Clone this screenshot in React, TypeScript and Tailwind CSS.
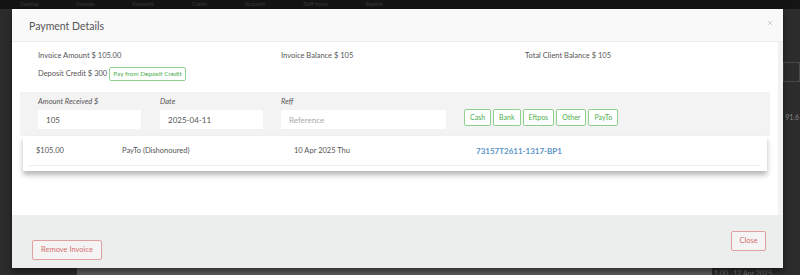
import { X } from "lucide-react"

const payTypes = ["Cash", "Bank", "Eftpos", "Other", "PayTo"]

const Backdrop = () => {
    return (
        <div className="absolute inset-0 bg-[#2c2c2c]">
            <div className="h-[9px] bg-[#141414] flex items-center gap-[38px] pl-[20px] text-[5px] text-[#3c3c3c]">
                <span>Desktop</span><span>Invoices</span><span>Payments</span><span>Clients</span><span>Accounts</span><span>Staff Hours</span><span>Reports</span>
            </div>
            <div className="absolute left-[77px] right-[88px] top-[240px] bottom-0 bg-[#5c5c5c]"></div>
            <div className="absolute right-0 top-[62px] w-[17px] h-[20px] border border-[#4a4a4a]"></div>
            <div className="absolute right-[1px] top-[112px] text-[7px] text-[#888]">91.6</div>
            <div className="absolute left-[714px] bottom-[-3px] text-[7px] text-[#6a6a6a]">1.00 &nbsp; 12 Apr 2025</div>
        </div>
    )
}

const App = () => {
    return (
        <div className="relative w-[800px] h-[275px] overflow-hidden font-['Lato','Liberation_Sans',sans-serif]">
            <Backdrop />

            <div className="absolute left-[12px] top-[9px] w-[771px] h-[259px] flex flex-col bg-[#f3f3f3] shadow-[0_3px_6px_rgba(0,0,0,0.5)]">
                {/* header */}
                <div className="relative h-[33px] shrink-0 flex items-center pl-[17px] pt-[3px] bg-[#f9f9f9] border-b border-[#ececec]">
                    <span className="text-[10.5px] text-[#555]">Payment Details</span>
                    <X className="absolute right-[9px] top-[10px] w-[8px] h-[8px] text-[#bbb]" strokeWidth={2} />
                </div>

                {/* body */}
                <div className="flex h-[173px] shrink-0">
                    <div className="flex-1 bg-white pt-[9px] text-[7.5px] text-[#555]">
                        <div className="grid grid-cols-[243px_244px_1fr] pl-[26px]">
                            <div className="h-[10px] leading-[10px]">Invoice Amount $ 105.00</div>
                            <div className="h-[10px] leading-[10px]">Invoice Balance $ 105</div>
                            <div className="h-[10px] leading-[10px]">Total Client Balance $ 105</div>
                        </div>
                        <div className="flex items-center gap-[2px] pl-[26px] mt-[6px]">
                            <span>Deposit Credit $ 300</span>
                            <span className="border border-[#8fd18f] rounded-[2px] px-[3px] h-[14px] leading-[12px] text-[6.5px] text-[#4cae4c]">Pay from Deposit Credit</span>
                        </div>

                        {/* form */}
                        <div className="mt-[11px] mx-[8px] h-[44px] bg-[#f3f3f3] flex items-start pl-[18px] pt-[5px]">
                            <div className="flex flex-col w-[103px]">
                                <span className="italic text-[7.5px] leading-[10px] text-[#555]">Amount Received $</span>
                                <div className="mt-[3px] h-[19px] bg-white flex items-center pl-[8px] text-[8px] text-[#555]">105</div>
                            </div>
                            <div className="flex flex-col w-[103px] ml-[19px]">
                                <span className="italic text-[7.5px] leading-[10px] text-[#555]">Date</span>
                                <div className="mt-[3px] h-[19px] bg-white flex items-center pl-[8px] text-[8px] text-[#555]">2025-04-11</div>
                            </div>
                            <div className="flex flex-col w-[165px] ml-[18px]">
                                <span className="italic text-[7.5px] leading-[10px] text-[#555]">Reff</span>
                                <div className="mt-[3px] h-[19px] bg-white flex items-center pl-[8px] text-[8px] text-[#aaa]">Reference</div>
                            </div>
                            <div className="flex gap-[2px] mt-[12px] ml-[18px]">
                                {payTypes.map((t) => (
                                    <span key={t} className="h-[17px] px-[5px] border border-[#8fd18f] rounded-[2px] flex items-center text-[7px] text-[#4cae4c] bg-white">{t}</span>
                                ))}
                            </div>
                        </div>

                        {/* payment row */}
                        <div className="mx-[11px] h-[35px] bg-white shadow-[0_4px_5px_rgba(0,0,0,0.28)] px-[6px]">
                            <div className="flex items-center h-[30px] border-b border-[#ececec] text-[7.5px] text-[#555]">
                                <span className="w-[87px] pl-[7px]">$105.00</span>
                                <span className="w-[172px] pl-[6px]">PayTo (Dishonoured)</span>
                                <span className="w-[182px] pl-[6px]">10 Apr 2025 Thu</span>
                                <span className="pl-[6px] text-[8px] font-bold text-[#5b95c8]">73157T2611-1317-BP1</span>
                            </div>
                        </div>
                    </div>
                    <div className="w-[5px] bg-[#f2f2f2]"></div>
                </div>

                {/* footer */}
                <div className="flex-1 bg-[#eceeee] flex justify-between items-start pl-[20px] pr-[17px] pt-[16px]">
                    <button className="mt-[9px] w-[70px] h-[20px] border border-[#e0a0a0] rounded-[2px] text-[7.5px] text-[#d77070] bg-[#f4f4f4]">Remove Invoice</button>
                    <button className="w-[35px] h-[20px] border border-[#e0a0a0] rounded-[2px] text-[7.5px] text-[#d77070] bg-[#f4f4f4]">Close</button>
                </div>
            </div>
        </div>
    )
}

export default App
